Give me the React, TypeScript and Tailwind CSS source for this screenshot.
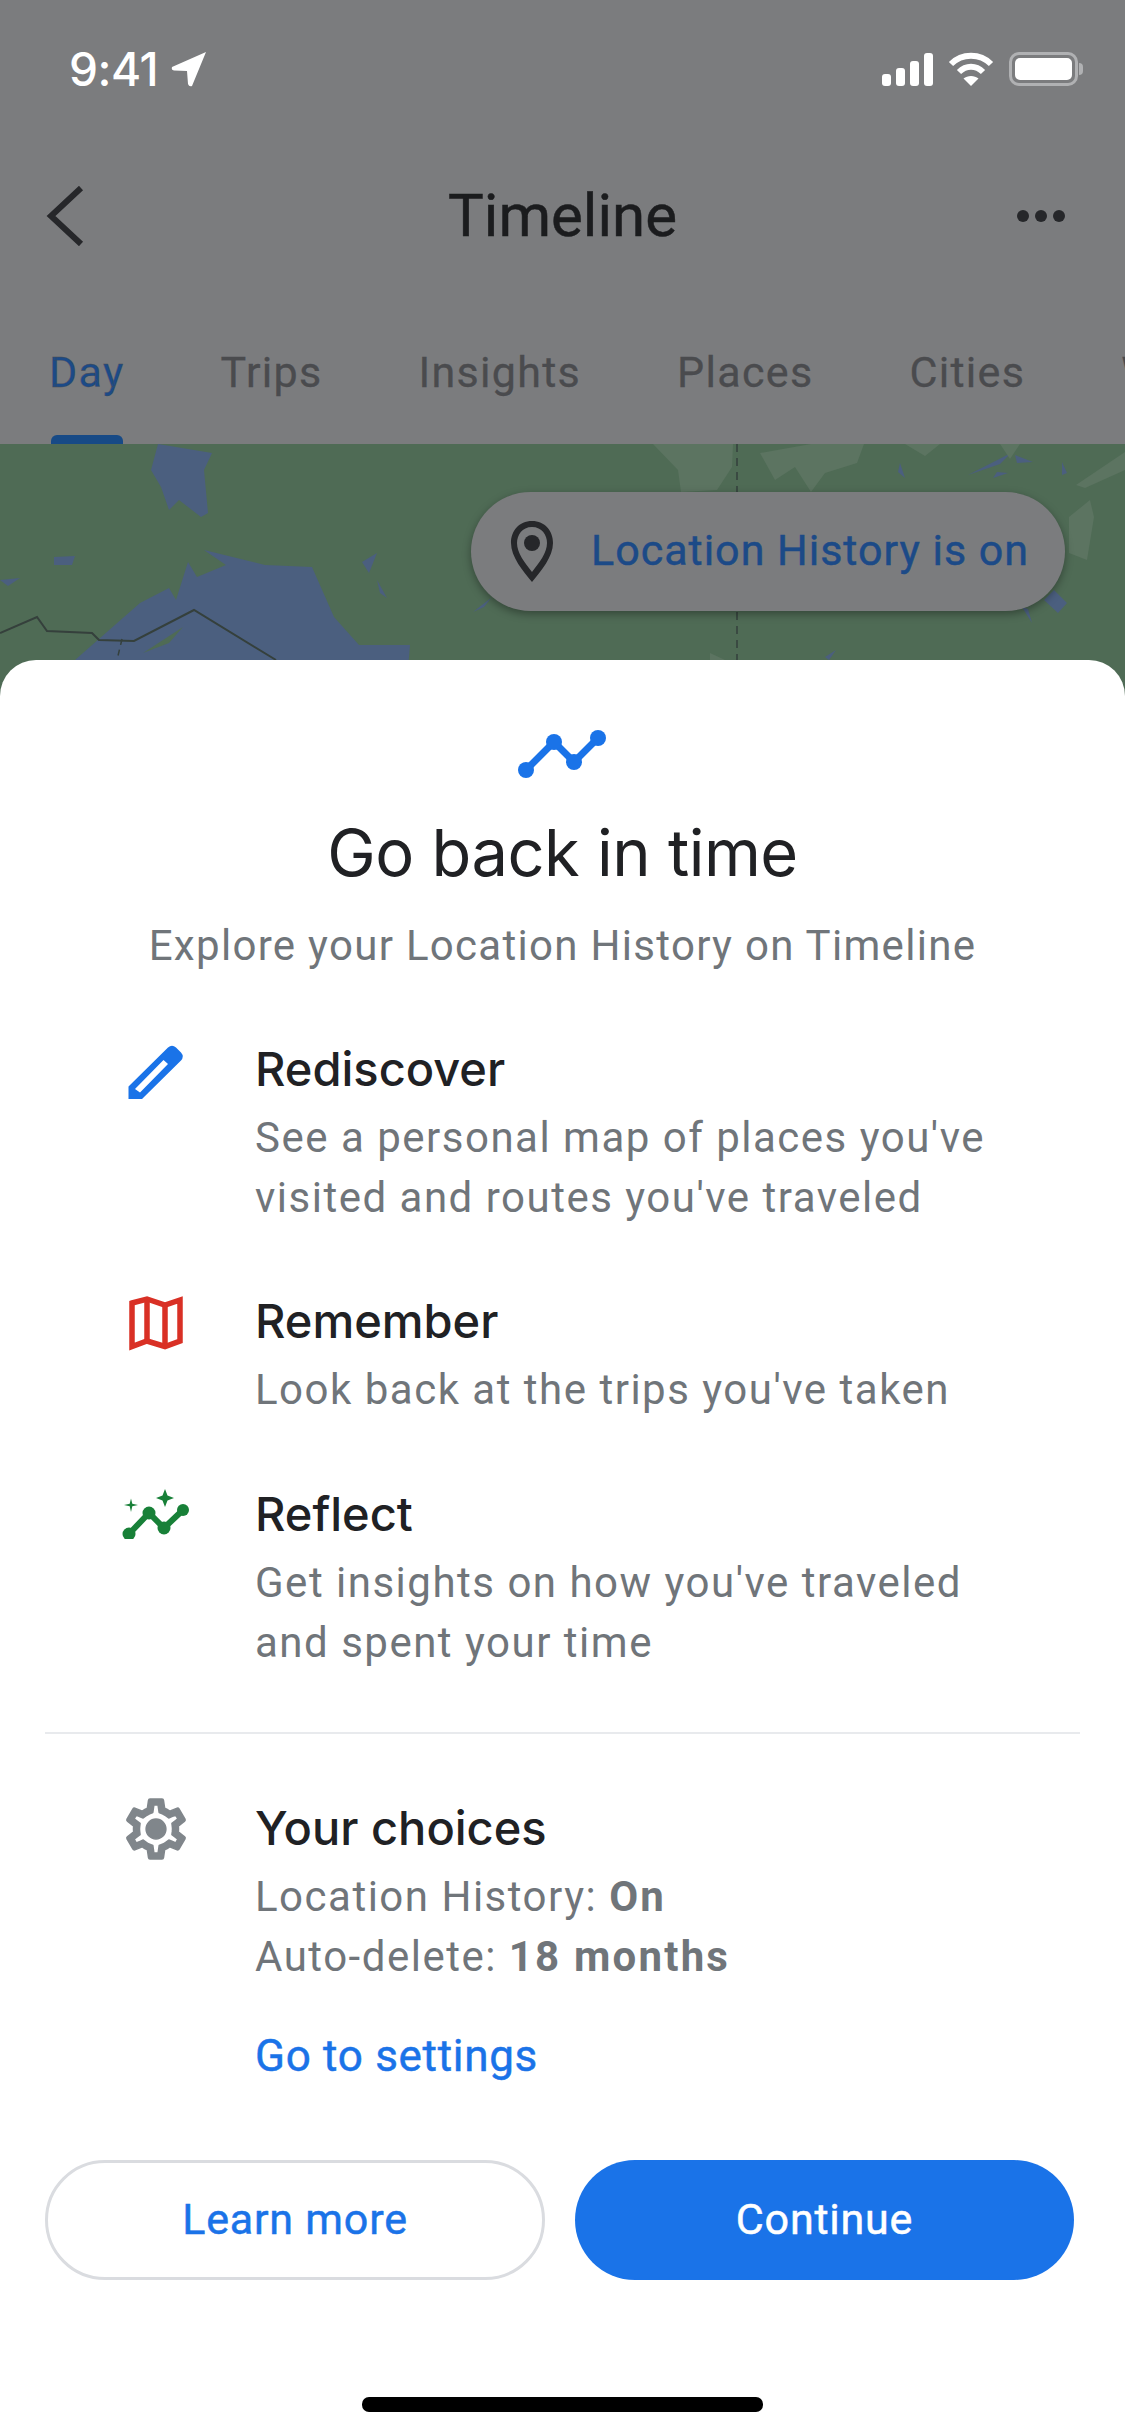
const tabs = [
  { label: "Day", className: "text-[#1c4a87]" },
  { label: "Trips", className: "text-[#4a4b4e]" },
  { label: "Insights", className: "text-[#4a4b4e]" },
  { label: "Places", className: "text-[#4a4b4e]" },
  { label: "Cities", className: "text-[#4a4b4e]" },
  { label: "World", className: "text-[#4a4b4e]" },
];

function StatusBar() {
  return (
    <div className="flex h-[138px] items-start justify-between pt-[46px] pl-[69px] pr-[42px] text-white">
      <div className="flex items-center gap-[13px]">
        <span className="font-['Inter',sans-serif] text-[46px] leading-[46px] font-medium tracking-[-0.5px]">9:41</span>
        <svg width="36" height="36" viewBox="0 0 36 36" fill="white">
          <path d="M35 1 L1 16 Q0 19 3 19.5 L16 20 L17 33 Q18 36 21 35 Z" />
        </svg>
      </div>
      <div className="flex items-center gap-[15px] pt-[6px]">
        <svg width="51" height="33" viewBox="0 0 51 33" fill="white">
          <rect x="0" y="21" width="9" height="12" rx="3" />
          <rect x="14" y="15" width="9" height="18" rx="3" />
          <rect x="28" y="8" width="9" height="25" rx="3" />
          <rect x="42" y="0" width="9" height="33" rx="3" />
        </svg>
        <svg width="46" height="34" viewBox="0 0 46 34" fill="none" stroke="white" strokeWidth="6">
          <path d="M3 12 C14 1 32 1 43 12" />
          <path d="M11 20 C18 13 28 13 35 20" />
          <path d="M23 34 L15.5 26.5 C19.5 23 26.5 23 30.5 26.5 Z" fill="white" stroke="none" />
        </svg>
        <div className="flex items-center gap-[1px]">
          <div className="flex h-[34px] w-[69px] items-center rounded-[10px] border-[3px] border-[#b0b1b3] p-[3px]">
            <div className="h-full w-full rounded-[5px] bg-white" />
          </div>
          <div className="h-[12px] w-[4px] rounded-r-full bg-[#b0b1b3]" />
        </div>
      </div>
    </div>
  );
}

function Header() {
  return (
    <div className="relative z-10 h-[444px] shrink-0 overflow-hidden bg-[#7b7c7e]">
      <StatusBar />
      <div className="mt-[8px] grid h-[140px] grid-cols-[1fr_auto_1fr] items-center px-[46px]">
        <svg width="38" height="60" viewBox="0 0 38 60" fill="none" stroke="#26272a" strokeWidth="6">
          <path d="M35 2 L5 30 L35 58" />
        </svg>
        <span className="font-['Roboto',sans-serif] text-[60px] leading-[70px] text-[#1b1c1e] [-webkit-text-stroke:0.5px_#1b1c1e]">Timeline</span>
        <svg className="mr-[14px] justify-self-end" width="48" height="14" viewBox="0 0 48 14" fill="#26272a">
          <circle cx="6" cy="7" r="6" />
          <circle cx="24" cy="7" r="6" />
          <circle cx="42" cy="7" r="6" />
        </svg>
      </div>
      <div className="mt-[61px] flex h-[50px] items-center gap-[96px] pl-[49px] font-['Roboto',sans-serif] text-[43px] tracking-[1.3px] [-webkit-text-stroke:0.3px_#4a4b4e]">
        {tabs.map((t) => (
          <span key={t.label} className={t.className}>{t.label}</span>
        ))}
      </div>
      <div className="absolute bottom-0 left-[51px] h-[9px] w-[72px] rounded-t-[6px] bg-[#174a86]" />
    </div>
  );
}

function MapBackdrop() {
  return (
    <svg className="absolute inset-0" width="1125" height="260" viewBox="0 0 1125 260">
      <rect width="1125" height="260" fill="#4f6b55" />
      <g fill="#4b5f7f">
        <path d="M158 0 L212 9 L204 26 L208 69 L201 73 L179 56 L169 66 L161 43 L151 26 Z" />
        <path d="M204 106 L265 121 L312 123 L334 173 L359 201 L410 201 L405 260 L40 260 L75 216 L140 159 L169 144 L176 156 L188 118 L197 133 L226 121 Z" />
        <path d="M54 113 L75 112 L72 121 L54 121 Z" />
        <path d="M0 136 L20 134 L8 142 Z" />
        <path d="M362 118 L377 109 L369 129 Z" />
        <path d="M377 136 L387 154 L380 149 Z" />
        <path d="M473 168 L491 154 L484 163 Z" />
        <path d="M900 19 L905 34 L898 28 Z" />
        <path d="M1011 9 L968 31 L1000 20 Z M1015 11 L1033 18 L1017 19 Z M997 28 L1008 29 L993 34 Z M1062 18 L1067 29 L1062 31 Z" />
        <path d="M1054 146 L1067 159 L1058 169 L1044 156 Z M1022 163 L1032 179 L1028 165 Z" />
        <path d="M825 213 L836 206 L829 216 Z" />
      </g>
      <path d="M143 209 L183 183 L169 199 Z" fill="#4f6b55" />
      <g fill="#5c7461">
        <path d="M653 0 L733 0 L732 23 L717 46 L681 48 L678 26 Z" />
        <path d="M760 9 L811 0 L864 0 L857 19 L825 29 L811 48 L795 23 L775 36 Z" />
        <path d="M905 0 L940 0 L925 12 Z M1000 0 L1010 15 L1020 0 Z" />
        <path d="M1076 41 L1125 8 L1125 26 L1085 44 Z" />
        <path d="M1090 56 L1094 73 L1087 116 L1069 109 L1069 73 Z" />
        <path d="M710 209 L725 216 L710 216 Z" />
      </g>
      <path d="M0 189 L37 173 L47 187 L92 189 L99 196 L134 197 L194 166 L276 216" fill="none" stroke="#35403c" strokeWidth="2" />
      <path d="M737 0 L737 216" stroke="#35403c" strokeWidth="1.5" strokeDasharray="8 6" />
      <path d="M122 195 L117 216" stroke="#35403c" strokeWidth="1.5" strokeDasharray="6 5" />
    </svg>
  );
}

function MapArea() {
  return (
    <div className="relative -mb-[44px] h-[260px] shrink-0 overflow-hidden">
      <MapBackdrop />
      <div className="absolute left-[471px] top-[48px] flex h-[119px] w-[594px] items-center rounded-full bg-[#7b7c7e] pl-[38px] shadow-[0_3px_8px_rgba(0,0,0,0.35)]">
        <svg width="46" height="62" viewBox="0 0 46 62">
          <path fillRule="evenodd" fill="#26272a" d="M23 0 C10 0 2 10 2 22 C2 36 14 50 23 61 C32 50 44 36 44 22 C44 10 36 0 23 0 Z M23 6 C33 6 38 14 38 22 C38 32 30 42 23 51 C16 42 8 32 8 22 C8 14 13 6 23 6 Z" />
          <circle cx="23" cy="22" r="8" fill="#26272a" />
        </svg>
        <span className="ml-[36px] -mt-[4px] font-['Roboto',sans-serif] text-[43px] leading-[50px] tracking-[1px] text-[#1c4a87] [-webkit-text-stroke:0.5px_#1c4a87]">Location History is on</span>
      </div>
    </div>
  );
}

function TrendIcon() {
  return (
    <svg width="88" height="48" viewBox="38 29 88 48" fill="#1a73e8">
      <path d="M46 69 L74 41 L94 61 L118 37" fill="none" stroke="#1a73e8" strokeWidth="7" />
      <circle cx="46" cy="69" r="8" />
      <circle cx="74" cy="41" r="8" />
      <circle cx="94" cy="61" r="8" />
      <circle cx="118" cy="37" r="8" />
    </svg>
  );
}

function PenIcon() {
  return (
    <svg className="mt-[5px]" width="56" height="56" viewBox="28 23.5 56 56">
      <path fillRule="evenodd" fill="#1a73e8" d="M28.5 78.5 L28.5 66 L68 27 Q72 23.5 76 27 L81 32 Q84.500 36 81 40 L42 78.500 Z M35 68.500 L63.500 39.500 L68 43.500 L40 72 Z" />
    </svg>
  );
}

function MapIcon() {
  return (
    <svg className="mt-[4px]" width="56" height="56" viewBox="28 25 56 56" fill="none" stroke="#d93025" strokeWidth="5.5">
      <path d="M32 33 L47 29 L65 35 L80 30 L80 71 L65 76.500 L47 71 L32 76.500 Z" />
      <path d="M47 29 L47 71 M65 35 L65 76.500" />
    </svg>
  );
}

function SparkIcon() {
  return (
    <svg className="mt-[5px]" width="68" height="50" viewBox="22 218 68 50" fill="#188038">
      <path d="M29 263 L49 242 L64 257 L83 239" fill="none" stroke="#188038" strokeWidth="6" />
      <circle cx="29" cy="263" r="6.500" />
      <circle cx="49" cy="242" r="6.500" />
      <circle cx="64" cy="257" r="6.500" />
      <circle cx="83" cy="239" r="6" />
      <path d="M65 218 L67.500 224.500 L74 227 L67.500 229.500 L65 236 L62.500 229.500 L56 227 L62.500 224.500 Z" />
      <path d="M31 227.500 L32.300 232.700 L38 234 L32.300 235.300 L31 241 L29.700 235.300 L24 234 L29.700 232.700 Z" />
    </svg>
  );
}

function GearIcon() {
  return (
    <svg className="-mt-[5px]" width="72" height="72" viewBox="0 0 24 24" fill="#80868b" stroke="#80868b" strokeWidth="0.5" strokeLinejoin="round">
      <path d="M19.43 12.98c.04-.32.07-.64.07-.98 0-.34-.03-.66-.07-.98l2.11-1.65c.19-.15.24-.42.12-.64l-2-3.46c-.09-.16-.26-.25-.44-.25-.06 0-.12.01-.17.03l-2.49 1c-.52-.4-1.08-.73-1.69-.98l-.38-2.65C14.46 2.18 14.25 2 14 2h-4c-.25 0-.46.18-.49.42l-.38 2.65c-.61.25-1.17.59-1.69.98l-2.49-1c-.06-.02-.12-.03-.18-.03-.17 0-.34.09-.43.25l-2 3.46c-.13.22-.07.49.12.64l2.11 1.65c-.04.32-.07.65-.07.98 0 .33.03.66.07.98l-2.11 1.65c-.19.15-.24.42-.12.64l2 3.46c.09.16.26.25.44.25.06 0 .12-.01.17-.03l2.49-1c.52.4 1.08.73 1.69.98l.38 2.65c.03.24.24.42.49.42h4c.25 0 .46-.18.49-.42l.38-2.65c.61-.25 1.17-.59 1.69-.98l2.49 1c.06.02.12.03.18.03.17 0 .34-.09.43-.25l2-3.46c.12-.22.07-.49-.12-.64l-2.11-1.65zm-1.98-1.71c.04.31.05.52.05.73 0 .21-.02.43-.05.73l-.14 1.13.89.7 1.08.84-.7 1.21-1.27-.51-1.04-.42-.9.68c-.43.32-.84.56-1.25.73l-1.06.43-.16 1.13-.2 1.35h-1.4l-.19-1.35-.16-1.13-1.06-.43c-.43-.18-.83-.41-1.23-.71l-.91-.7-1.06.43-1.27.51-.7-1.21 1.08-.84.89-.7-.14-1.13c-.03-.31-.05-.54-.05-.74s.02-.43.05-.73l.14-1.13-.89-.7-1.08-.84.7-1.21 1.27.51 1.04.42.9-.68c.43-.32.84-.56 1.25-.73l1.06-.43.16-1.13.2-1.35h1.39l.19 1.35.16 1.13 1.06.43c.43.18.83.41 1.23.71l.91.7 1.06-.43 1.27-.51.7 1.21-1.07.85-.89.7.14 1.13z" />
      <circle cx="12" cy="12" r="3.300" />
    </svg>
  );
}

function FeatureRow({ icon, title, lines, className }: { icon: React.ReactNode; title: string; lines: React.ReactNode[]; className?: string }) {
  return (
    <div className={`flex pl-[100px] ${className ?? ""}`}>
      <div className="flex w-[112px] shrink-0 items-start justify-center">{icon}</div>
      <div className="ml-[43px]">
        <div className="h-[60px] font-['Inter',sans-serif] text-[47px] leading-[60px] font-medium text-[#202124]">{title}</div>
        <div className="mt-[9px] font-['Roboto',sans-serif] text-[42px] leading-[60px] tracking-[1.5px] text-[#70757a]">
          {lines.map((l, i) => (
            <div key={i} className="h-[60px]">{l}</div>
          ))}
        </div>
      </div>
    </div>
  );
}

function Sheet() {
  return (
    <div className="relative flex flex-1 flex-col rounded-t-[36px] bg-white">
      <div className="mt-[70px] flex justify-center pr-[2px]">
        <TrendIcon />
      </div>
      <h1 className="mt-[33px] h-[84px] text-center font-['Inter',sans-serif] text-[65px] leading-[84px] font-normal tracking-[-0.5px] text-[#202124]">Go back in time</h1>
      <p className="mt-[21px] h-[60px] text-center font-['Roboto',sans-serif] text-[42px] leading-[60px] tracking-[1.3px] text-[#70757a]">Explore your Location History on Timeline</p>
      <FeatureRow className="mt-[63px]" icon={<PenIcon />} title="Rediscover" lines={["See a personal map of places you've", "visited and routes you've traveled"]} />
      <FeatureRow className="mt-[63px]" icon={<MapIcon />} title="Remember" lines={["Look back at the trips you've taken"]} />
      <FeatureRow className="mt-[64px]" icon={<SparkIcon />} title="Reflect" lines={["Get insights on how you've traveled", "and spent your time"]} />
      <div className="mx-[45px] mt-[59px] h-[2px] bg-[#e8eaed]" />
      <FeatureRow
        className="mt-[64px]"
        icon={<GearIcon />}
        title="Your choices"
        lines={[
          <>Location History: <b className="font-bold tracking-[2.2px]">On</b></>,
          <>Auto-delete: <b className="font-bold tracking-[2.2px]">18 months</b></>,
        ]}
      />
      <div className="mt-[39px] ml-[255px] h-[60px] font-['Roboto',sans-serif] text-[44px] leading-[60px] tracking-[0.7px] text-[#1a73e8] [-webkit-text-stroke:0.5px_#1a73e8]">Go to settings</div>
      <div className="mt-[74px] flex gap-[30px] pl-[45px]">
        <button className="h-[120px] w-[500px] rounded-full border-[3px] border-[#dadce0] bg-white pb-[2px] font-['Roboto',sans-serif] text-[43px] tracking-[0.8px] text-[#1a73e8] [-webkit-text-stroke:0.5px_#1a73e8]">Learn more</button>
        <button className="h-[120px] w-[499px] rounded-full bg-[#1a73e8] pb-[2px] font-['Roboto',sans-serif] text-[43px] tracking-[0.8px] text-white [-webkit-text-stroke:0.5px_white]">Continue</button>
      </div>
      <div className="mt-[117px] ml-[362px] h-[15px] w-[401px] rounded-[7px] bg-black" />
    </div>
  );
}

export default function App() {
  return (
    <div className="flex h-[2436px] w-[1125px] flex-col overflow-hidden bg-white">
      <Header />
      <MapArea />
      <Sheet />
    </div>
  );
}
